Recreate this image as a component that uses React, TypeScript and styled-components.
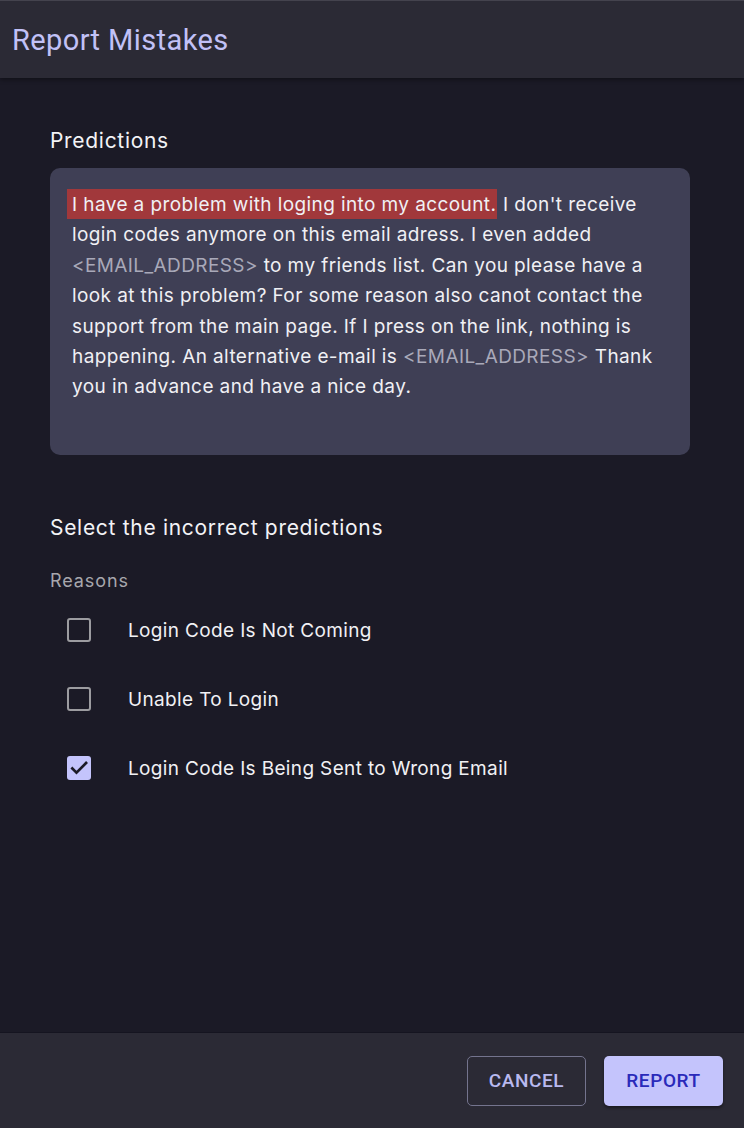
import React, { useState } from "react";
import styled, { createGlobalStyle } from "styled-components";

const GlobalStyle = createGlobalStyle`
  html, body {
    margin: 0;
    padding: 0;
    background: #1b1a26;
  }
  * {
    box-sizing: border-box;
  }
`;

const Dialog = styled.div`
  width: 744px;
  height: 1128px;
  display: flex;
  flex-direction: column;
  background: #1b1a26;
  font-family: Inter, "Noto Sans", sans-serif;
  color: #f1f1f4;
`;

const Header = styled.div`
  height: 78px;
  flex-shrink: 0;
  display: flex;
  align-items: center;
  padding: 0 12px;
  background: #2b2a35;
  border-top: 1px solid #44434e;
  box-shadow: 0 2px 4px rgba(0, 0, 0, 0.35);
`;

const Title = styled.h1`
  margin: 0;
  font-family: Roboto, "Liberation Sans", sans-serif;
  font-size: 29px;
  letter-spacing: 0.4px;
  font-weight: 400;
  color: #c1c1f7;
`;

const Body = styled.div`
  flex: 1;
  padding: 50px 54px 0 50px;
  display: flex;
  flex-direction: column;
`;

const SectionTitle = styled.div<{ $top?: number }>`
  font-size: 21px;
  letter-spacing: 0.7px;
  line-height: 26px;
  margin-top: ${(p) => p.$top ?? 0}px;
  color: #f3f3f6;
`;

const PredictionBox = styled.div`
  margin-top: 14px;
  height: 287px;
  background: #3f3f55;
  border-radius: 10px;
  padding: 22px 22px 0 22px;
  font-size: 19px;
  line-height: 30.4px;
  letter-spacing: 0.4px;
  color: #f0f0f4;
`;

const Highlight = styled.span`
  background: #a1383b;
  padding: 4px 1px 3px 5px;
  margin-left: -5px;
`;

const Placeholder = styled.span`
  color: #a9a9b9;
`;

const Caption = styled.div`
  margin-top: 29px;
  font-size: 18px;
  line-height: 22px;
  letter-spacing: 0.9px;
  color: #a7a7ad;
`;

const ReasonList = styled.div`
  margin-top: 14px;
  display: flex;
  flex-direction: column;
  gap: 21px;
`;

const ReasonRow = styled.label`
  display: flex;
  align-items: center;
  height: 48px;
  padding-left: 17px;
  cursor: pointer;
`;

const Box = styled.span<{ $checked: boolean }>`
  width: 24px;
  height: 24px;
  border-radius: 3px;
  display: flex;
  align-items: center;
  justify-content: center;
  border: ${(p) => (p.$checked ? "none" : "2px solid #9c9ca0")};
  background: ${(p) => (p.$checked ? "#c4c4fc" : "transparent")};
`;

const ReasonText = styled.span`
  margin-left: 37px;
  font-size: 19px;
  letter-spacing: 0.35px;
  color: #f1f1f4;
`;

const Footer = styled.div`
  height: 96px;
  flex-shrink: 0;
  display: flex;
  align-items: center;
  justify-content: flex-end;
  gap: 18px;
  padding: 0 21px 0 0;
  background: #2b2a35;
  border-top: 1px solid #151420;
`;

const Button = styled.button<{ $primary?: boolean }>`
  width: 119px;
  height: 50px;
  border-radius: 5px;
  font-family: Roboto, "Liberation Sans", sans-serif;
  font-size: 19px;
  font-weight: 500;
  letter-spacing: 0.6px;
  text-transform: uppercase;
  cursor: pointer;
  border: ${(p) => (p.$primary ? "none" : "1.5px solid #74748e")};
  background: ${(p) => (p.$primary ? "#c4c4fc" : "transparent")};
  color: ${(p) => (p.$primary ? "#2a2aba" : "#b9b9ef")};
  box-shadow: ${(p) => (p.$primary ? "0 2px 3px rgba(0,0,0,0.4)" : "none")};
`;

const reasons = [
  "Login Code Is Not Coming",
  "Unable To Login",
  "Login Code Is Being Sent to Wrong Email",
];

const Check = () => (
  <svg width="20" height="20" viewBox="0 0 24 24" fill="none">
    <path
      d="M4 12.5l5 5L20.5 6"
      stroke="#1b1a26"
      strokeWidth="3.2"
      strokeLinecap="square"
    />
  </svg>
);

const App: React.FC = () => {
  const [checked, setChecked] = useState<boolean[]>([false, false, true]);

  const toggle = (i: number) => {
    setChecked(checked.map((c, j) => (j === i ? !c : c)));
  };

  return (
    <Dialog>
      <GlobalStyle />
      <Header>
        <Title>Report Mistakes</Title>
      </Header>
      <Body>
        <SectionTitle>Predictions</SectionTitle>
        <PredictionBox>
          <Highlight>I have a problem with loging into my account.</Highlight>{" "}
          I don't receive login codes anymore on this email adress. I even added{" "}
          <Placeholder>&lt;EMAIL_ADDRESS&gt;</Placeholder> to my friends list.
          Can you please have a look at this problem? For some reason also canot
          contact the support from the main page. If I press on the link,
          nothing is happening. An alternative e-mail is{" "}
          <Placeholder>&lt;EMAIL_ADDRESS&gt;</Placeholder> Thank you in advance
          and have a nice day.
        </PredictionBox>

        <SectionTitle $top={60}>Select the incorrect predictions</SectionTitle>
        <Caption>Reasons</Caption>
        <ReasonList>
          {reasons.map((r, i) => (
            <ReasonRow key={r} onClick={() => toggle(i)}>
              <Box $checked={checked[i]}>{checked[i] && <Check />}</Box>
              <ReasonText>{r}</ReasonText>
            </ReasonRow>
          ))}
        </ReasonList>
      </Body>
      <Footer>
        <Button>Cancel</Button>
        <Button $primary>Report</Button>
      </Footer>
    </Dialog>
  );
};

export default App;
